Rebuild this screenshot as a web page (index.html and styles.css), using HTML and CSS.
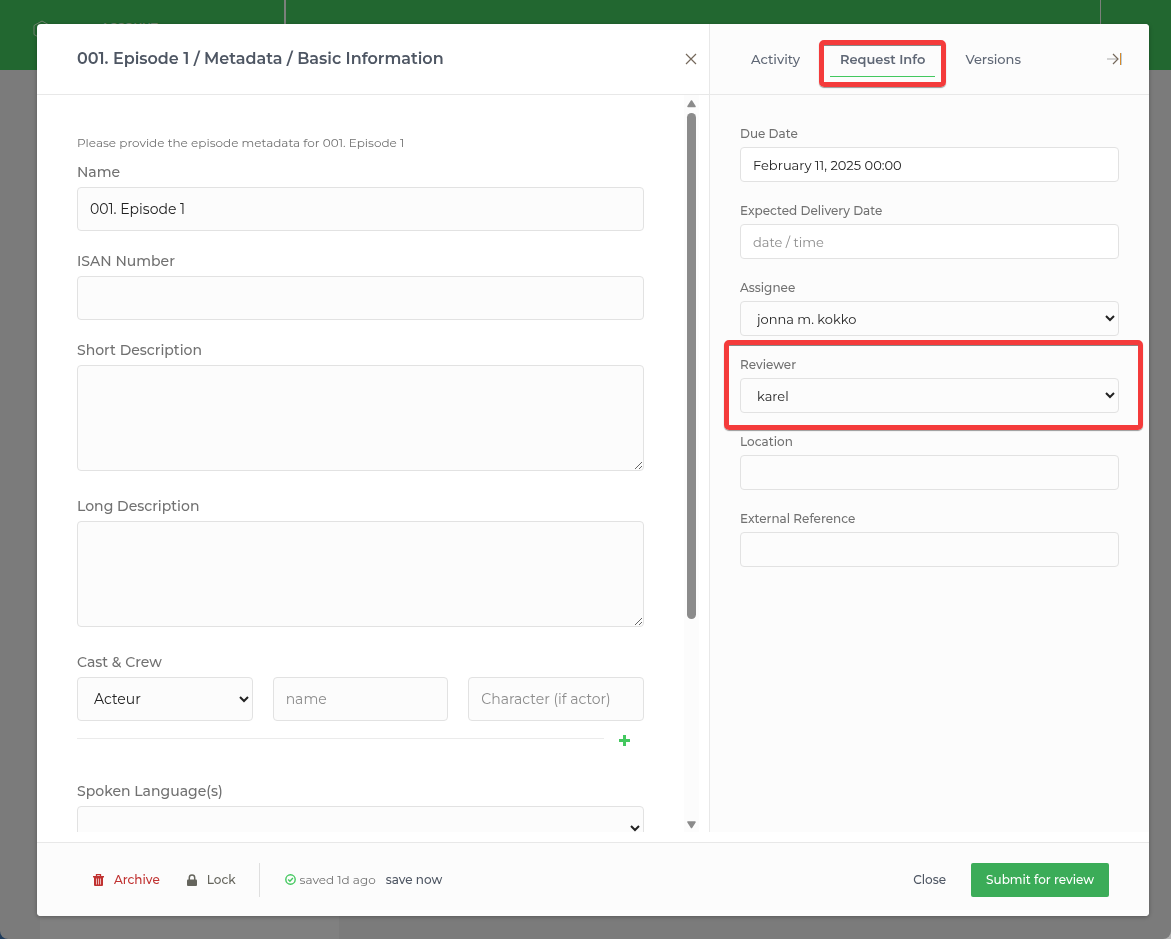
FILE: index.html
```html
<!DOCTYPE html>
<html lang="en">
<head>
    <meta charset="UTF-8">
    <meta name="viewport" content="width=device-width, initial-scale=1.0">
    <title>Basic Information</title>
    <link rel="stylesheet" href="styles.css">
</head>
<body>
    <!-- Page behind the modal -->
    <div class="page">
        <header class="topbar">
            <div class="account">
                <svg class="logo" width="18" height="20" viewBox="0 0 18 20"><path d="M9 1l8 4.500v9L9 19l-8-4.500v-9z" fill="none" stroke="currentColor"/></svg>
                <span>ACCOUNT</span>
            </div>
            <div class="topbar-user"></div>
        </header>
        <div class="page-card"></div>
    </div>

    <div class="modal" role="dialog" aria-labelledby="modalTitle">
        <div class="modal-body">
            <section class="main">
                <header class="main-header">
                    <h1 id="modalTitle">001. Episode 1 / Metadata / Basic Information</h1>
                    <button type="button" class="icon-button" aria-label="Close window">
                        <svg width="12" height="12" viewBox="0 0 12 12"><path d="M1 1l10 10M11 1L1 11" fill="none" stroke="currentColor" stroke-width="1.200"/></svg>
                    </button>
                </header>
                <div class="scroller">
                    <form class="metadata">
                        <p class="help">Please provide the episode metadata for 001. Episode 1</p>
                        <div class="field">
                            <label for="name">Name</label>
                            <input type="text" id="name" value="001. Episode 1">
                        </div>
                        <div class="field">
                            <label for="isan">ISAN Number</label>
                            <input type="text" id="isan">
                        </div>
                        <div class="field field-long">
                            <label for="shortDescription">Short Description</label>
                            <textarea id="shortDescription"></textarea>
                        </div>
                        <div class="field field-long">
                            <label for="longDescription">Long Description</label>
                            <textarea id="longDescription"></textarea>
                        </div>
                        <div class="field field-crew">
                            <label for="crewRole">Cast &amp; Crew</label>
                            <div class="crew">
                                <select id="crewRole"><option>Acteur</option></select>
                                <input type="text" placeholder="name" aria-label="Crew name">
                                <input type="text" placeholder="Character (if actor)" aria-label="Character">
                            </div>
                            <div class="crew-add">
                                <hr>
                                <button type="button" class="icon-button add" aria-label="Add crew member">
                                    <svg width="11" height="11" viewBox="0 0 11 11"><path d="M5.500 0v11M0 5.500h11" stroke="currentColor" stroke-width="3"/></svg>
                                </button>
                            </div>
                        </div>
                        <div class="field">
                            <label for="language">Spoken Language(s)</label>
                            <select id="language"><option></option></select>
                        </div>
                    </form>
                    <div class="scrollbar" aria-hidden="true">
                        <svg width="9" height="8" viewBox="0 0 9 8"><path d="M4.500 1l3.500 5.500H1z" fill="currentColor" stroke="currentColor" stroke-width="1.500" stroke-linejoin="round"/></svg>
                        <div class="scroll-track"><div class="scroll-thumb"></div></div>
                        <svg width="9" height="8" viewBox="0 0 9 8"><path d="M4.500 6.500L1 1h7z" fill="currentColor" stroke="currentColor" stroke-width="1.500" stroke-linejoin="round"/></svg>
                    </div>
                </div>
            </section>

            <aside class="side">
                <nav class="tabs">
                    <button type="button" class="tab">Activity</button>
                    <button type="button" class="tab active">Request Info</button>
                    <button type="button" class="tab">Versions</button>
                    <button type="button" class="icon-button collapse" aria-label="Collapse panel">
                        <svg width="16" height="14" viewBox="0 0 16 14"><path d="M0 7h11" stroke="#aaa" stroke-width="1.200"/><path d="M6 2l5 5-5 5" fill="none" stroke="#75695c" stroke-width="1.200"/><path d="M13.500 1v12" stroke="#d98a2b"/><path d="M14.500 1v12" stroke="#b9cfe0"/></svg>
                    </button>
                </nav>
                <form class="request">
                    <div class="field">
                        <label for="dueDate">Due Date</label>
                        <input type="text" id="dueDate" value="February 11, 2025 00:00">
                    </div>
                    <div class="field">
                        <label for="deliveryDate">Expected Delivery Date</label>
                        <input type="text" id="deliveryDate" placeholder="date / time">
                    </div>
                    <div class="field">
                        <label for="assignee">Assignee</label>
                        <select id="assignee"><option>jonna m. kokko</option></select>
                    </div>
                    <div class="field highlight">
                        <label for="reviewer">Reviewer</label>
                        <select id="reviewer"><option>karel</option></select>
                    </div>
                    <div class="field">
                        <label for="location">Location</label>
                        <input type="text" id="location" class="plain">
                    </div>
                    <div class="field">
                        <label for="externalReference">External Reference</label>
                        <input type="text" id="externalReference" class="plain">
                    </div>
                </form>
            </aside>
        </div>

        <footer class="modal-footer">
            <button type="button" class="link-button danger">
                <svg width="11" height="12" viewBox="0 0 11 12"><path d="M3.500 2V.7h4V2" fill="none" stroke="currentColor" stroke-width="1.300"/><path d="M0 2h11v1.400H0z" fill="currentColor"/><path d="M1 3h9v8q0 1-1 1H2q-1 0-1-1z" fill="currentColor"/><path d="M3.500 4.500v6M5.500 4.500v6M7.500 4.500v6" stroke="#f3c9c8" stroke-width=".9"/></svg>
                Archive
            </button>
            <button type="button" class="link-button lock">
                <svg width="10" height="12" viewBox="0 0 10 12"><path d="M2.300 6V3.800a2.700 2.700 0 0 1 5.400 0V6" fill="none" stroke="currentColor" stroke-width="1.500"/><rect y="5.500" width="10" height="6.500" rx="1" fill="currentColor"/></svg>
                Lock
            </button>
            <div class="save-state">
                <svg width="11" height="11" viewBox="0 0 11 11"><circle cx="5.500" cy="5.500" r="4.700" fill="none" stroke="currentColor" stroke-width="1.400"/><path d="M3.200 5.500l1.700 1.700 3-3.200" fill="none" stroke="currentColor" stroke-width="1.400"/></svg>
                <span>saved 1d ago</span>
                <button type="button" class="link-button save">save now</button>
            </div>
            <div class="actions">
                <button type="button" class="link-button">Close</button>
                <button type="button" class="submit">Submit for review</button>
            </div>
        </footer>
    </div>
</body>
</html>
```

FILE: styles.css
```css
* {
    box-sizing: border-box;
}
body {
    margin: 0;
    height: 100vh;
    overflow: hidden;
    font-family: Montserrat, Inter, sans-serif;
    font-size: 13px;
    color: #4e5663;
    background: linear-gradient(to right, #1f3c5c 50%, #b5b5b5 50%);
}
button, input, select, textarea {
    font-family: inherit;
    font-size: inherit;
}
button {
    border: none;
    background: none;
    padding: 0;
    cursor: pointer;
}
svg {
    display: block;
    flex: none;
}

/* page behind the modal */
.page {
    height: 100vh;
    display: flex;
    flex-direction: column;
    justify-content: space-between;
    border-radius: 0 0 8px 8px;
    background-color: #7b7b7b;
}
.topbar {
    display: flex;
    justify-content: space-between;
    height: 70px;
    background-color: #226730;
    color: #71846f;
}
.account {
    display: flex;
    align-items: flex-start;
    gap: 50px;
    width: 286px;
    padding: 20px 0 0 33px;
    border-right: 2px solid #7b807b;
    font-size: 11px;
    font-weight: 600;
}
.topbar-user {
    width: 71px;
    border-left: 1px solid #7b807b;
}
.page-card {
    width: 299px;
    height: 60px;
    margin-left: 40px;
    background-color: #808080;
}

/* modal */
.modal {
    position: fixed;
    top: 24px;
    right: 22px;
    bottom: 23px;
    left: 37px;
    display: flex;
    flex-direction: column;
    gap: 10px;
    overflow: hidden;
    border-radius: 4px;
    background-color: #fff;
    box-shadow: 0 1px 4px rgba(0, 0, 0, 0.3);
}
.modal-body {
    flex: 1;
    min-height: 0;
    display: grid;
    grid-template-columns: minmax(0, 1fr) 440px;
    grid-template-rows: minmax(0, 1fr);
}
.main {
    display: flex;
    flex-direction: column;
    min-height: 0;
}
.main-header {
    display: flex;
    align-items: center;
    justify-content: space-between;
    flex: none;
    height: 71px;
    padding: 0 12px 0 40px;
    border-bottom: 1px solid #e8e8e8;
}
h1 {
    margin: 0;
    font-size: 16px;
    font-weight: 600;
    line-height: 22px;
}
.icon-button {
    color: #75695c;
}
.scroller {
    flex: 1;
    min-height: 0;
    display: flex;
    padding-right: 10px;
}
.metadata {
    flex: 1;
    overflow-y: auto;
    scrollbar-width: none;
    padding: 34px 40px;
    font-size: 14px;
}
.help {
    margin: 0;
    font-size: 12px;
    line-height: 28px;
    color: #717171;
}
.field {
    position: relative;
    margin-bottom: 15px;
}
.field label {
    display: block;
    line-height: 30px;
    font-weight: 500;
    color: #717171;
}
.field input, .field select, .field textarea {
    display: block;
    width: 100%;
    height: 44px;
    padding: 0 12px;
    border: 1px solid #e2e2e2;
    border-radius: 4px;
    background-color: #fcfcfc;
    color: #222;
}
.field textarea {
    height: 106px;
    padding: 12px;
}
.field ::placeholder {
    color: #8c8c8c;
}
.field-long {
    margin-bottom: 20px;
}
.field-crew {
    margin-bottom: 17px;
}
.crew {
    display: grid;
    grid-template-columns: repeat(3, minmax(0, 1fr));
    gap: 20px;
}
.crew-add {
    display: flex;
    align-items: center;
    gap: 15px;
    height: 38px;
    padding-right: 14px;
}
.crew-add hr {
    flex: 1;
    margin: 0 0 4px;
    border: none;
    border-top: 1px solid #ebebeb;
}
.add {
    color: #43c85f;
}

.scrollbar {
    display: flex;
    flex-direction: column;
    align-items: center;
    gap: 5px;
    width: 15px;
    padding: 5px 0 3px;
    background-color: #fcfcfc;
    color: #8b8b8b;
}
.scroll-track {
    flex: 1;
    width: 9px;
}
.scroll-thumb {
    height: 72%;
    border-radius: 5px;
    background-color: #8b8b8b;
}

/* side panel */
.side {
    display: flex;
    flex-direction: column;
    border-left: 1px solid #e8e8e8;
    background-color: #fcfcfc;
}
.tabs {
    display: flex;
    align-items: center;
    gap: 20px;
    height: 71px;
    padding: 0 26px 0 31px;
    border-bottom: 1px solid #e8e8e8;
}
.tab {
    position: relative;
    height: 36px;
    padding: 0 10px;
    border-bottom: 1px solid transparent;
    font-size: 13px;
    font-weight: 500;
    color: #5f6775;
}
.tab.active {
    border-bottom-color: #43c85f;
    font-weight: 600;
}
.tab.active::after, .highlight::after {
    content: "";
    position: absolute;
    border: 5px solid #f43b3b;
    border-radius: 5px;
    pointer-events: none;
    box-shadow: 0 1px 1px #999, inset 0 1px 0 #888;
}
.tab.active::after {
    inset: -1px -11px -11px;
}
.highlight::after {
    inset: -12px -24px -17px -16px;
}
.collapse {
    margin-left: auto;
}
.request {
    padding: 26px 30px;
}
.request .field {
    margin-bottom: 16px;
}
.request .field label {
    line-height: 26px;
    font-size: 12px;
}
.request .field input, .request .field select {
    height: 35px;
    background-color: #fff;
}
.request .field select, .request .field .plain {
    background-color: #fcfcfc;
}

/* footer */
.modal-footer {
    display: flex;
    align-items: center;
    height: 74px;
    padding: 0 40px 0 56px;
    border-top: 1px solid #e8e8e8;
    background-color: #fcfcfc;
    font-size: 12px;
}
.link-button {
    display: flex;
    align-items: center;
    gap: 10px;
    font-weight: 500;
    color: #4e5663;
}
.danger {
    color: #c03231;
}
.lock {
    margin-left: 27px;
    color: #65655d;
}
.save-state {
    display: flex;
    align-items: center;
    gap: 4px;
    height: 34px;
    margin-left: 23px;
    padding-left: 25px;
    border-left: 1px solid #dfdfdf;
    color: #717171;
}
.save-state svg {
    color: #43c85f;
}
.save {
    margin-left: 6px;
}
.actions {
    display: flex;
    align-items: center;
    gap: 25px;
    margin-left: auto;
}
.submit {
    height: 34px;
    padding: 0 15px;
    border-radius: 2px;
    background-color: #3bac58;
    color: #fff;
    font-weight: 500;
}
```
